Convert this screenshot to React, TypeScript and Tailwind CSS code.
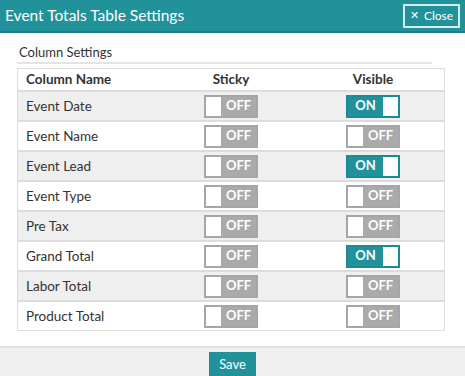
import React from "react"

type Row = { name: string; sticky: boolean; visible: boolean }

const rows: Row[] = [
  { name: "Event Date", sticky: false, visible: true },
  { name: "Event Name", sticky: false, visible: false },
  { name: "Event Lead", sticky: false, visible: true },
  { name: "Event Type", sticky: false, visible: false },
  { name: "Pre Tax", sticky: false, visible: false },
  { name: "Grand Total", sticky: false, visible: true },
  { name: "Labor Total", sticky: false, visible: false },
  { name: "Product Total", sticky: false, visible: false },
]

function Toggle({ on }: { on: boolean }) {
  if (on) {
    return (
      <div className="flex h-[23px] w-[54px] items-stretch border-2 border-[#1c8a93] bg-[#22929a]">
        <span className="flex flex-1 items-center justify-center text-[13px] font-bold text-white">ON</span>
        <span className="w-[15px] bg-white" />
      </div>
    )
  }
  return (
    <div className="flex h-[23px] w-[54px] items-stretch border-2 border-[#a6a6a6] bg-[#aaaaaa]">
      <span className="w-[15px] bg-white" />
      <span className="flex flex-1 items-center justify-center text-[13px] font-bold text-white">OFF</span>
    </div>
  )
}

export default function App() {
  return (
    <div className="flex h-[376px] w-[465px] flex-col overflow-hidden bg-white font-['Lato','Liberation_Sans',sans-serif] text-[#333]">
      <header className="flex h-[33px] shrink-0 items-center justify-between border-b-2 border-[#1b7f87] bg-[#22929a] pl-[5px] pr-[5px]">
        <h1 className="text-[15.5px] text-white">Event Totals Table Settings</h1>
        <button className="flex h-[24px] w-[57px] items-center justify-center gap-[5px] border-2 border-[#d6eef0] text-[12px] text-white">
          <span className="text-[11px]">✕</span>
          Close
        </button>
      </header>

      <div className="flex-1 pl-[17px] pr-[20px] pt-[11px]">
        <div className="mr-[13px] border-b-2 border-[#e4e4e4] pb-[2px] pl-[2px] text-[13px] leading-[16px]">Column Settings</div>
        <div className="mt-[4px] border border-[#dedede] text-[13.5px]">
          <div className="grid h-[23px] grid-cols-3 items-center border-b-2 border-[#dcdcdc] font-bold">
            <span className="pl-[8px]">Column Name</span>
            <span className="text-center">Sticky</span>
            <span className="text-center">Visible</span>
          </div>
          {rows.map((row, i) => (
            <div
              key={row.name}
              className={
                "grid grid-cols-3 items-center " +
                (i % 2 === 0 ? "bg-[#efefef]" : "bg-white") +
                (i < rows.length - 1 ? " h-[30px] border-b-2 border-[#dcdcdc]" : " h-[28px]")
              }
            >
              <span className="pl-[8px]">{row.name}</span>
              <div className="flex justify-center">
                <Toggle on={row.sticky} />
              </div>
              <div className="flex justify-center">
                <Toggle on={row.visible} />
              </div>
            </div>
          ))}
        </div>
      </div>

      <footer className="flex h-[30px] shrink-0 justify-center border-t-2 border-[#e2e2e2] bg-[#efefef] pt-[4px]">
        <button className="h-[26px] w-[47px] bg-[#22929a] text-[13px] text-white">Save</button>
      </footer>
    </div>
  )
}
